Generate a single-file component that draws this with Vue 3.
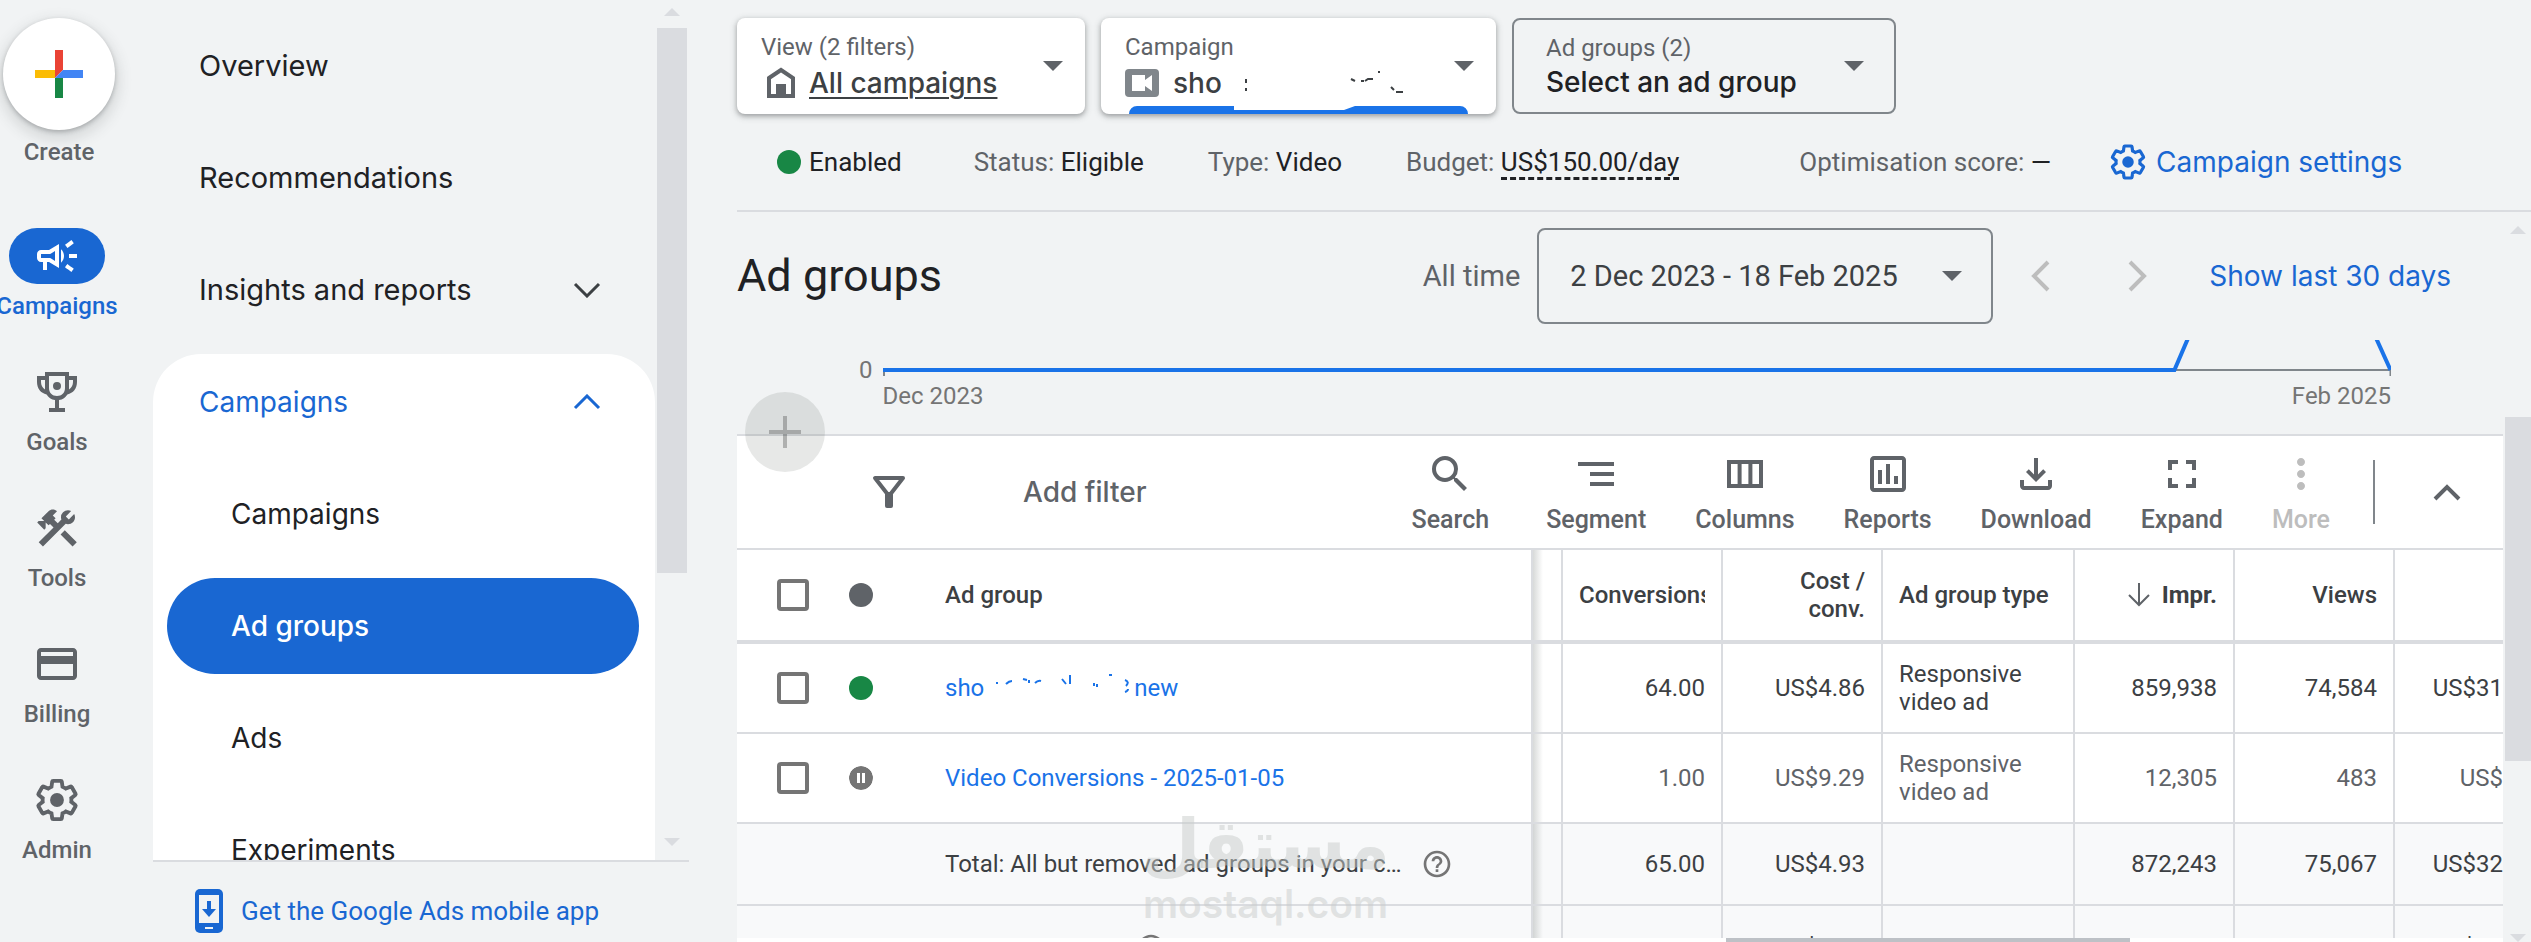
<script setup>
import { ref } from "vue";

const railItems = ["Campaigns", "Goals", "Tools", "Billing", "Admin"];

const navItems = ["Overview", "Recommendations", "Insights and reports"];
const subItems = ["Campaigns", "Ad groups", "Ads", "Experiments"];

const tools = ["Search", "Segment", "Columns", "Reports", "Download", "Expand", "More"];

const allSelected = ref(false);

const rows = ref([
  {
    paused: false,
    name: "sho",
    tail: "new",
    selected: false,
    conversions: "64.00",
    cost: "US$4.86",
    type: "Responsive video ad",
    impr: "859,938",
    views: "74,584",
    spend: "US$31",
  },
  {
    paused: true,
    name: "Video Conversions - 2025-01-05",
    selected: false,
    conversions: "1.00",
    cost: "US$9.29",
    type: "Responsive video ad",
    impr: "12,305",
    views: "483",
    spend: "US$",
  },
]);

const gearPath =
  "M19.43 12.98c.04-.32.07-.64.07-.98s-.03-.66-.07-.98l2.11-1.65c.19-.15.24-.42.12-.64l-2-3.46c-.12-.22-.39-.3-.61-.22l-2.49 1c-.52-.4-1.08-.73-1.69-.98l-.38-2.65A.488.488 0 0 0 14 2h-4c-.25 0-.46.18-.49.42l-.38 2.65c-.61.25-1.17.59-1.69.98l-2.49-1c-.23-.09-.49 0-.61.22l-2 3.46c-.13.22-.07.49.12.64l2.11 1.65c-.04.32-.07.65-.07.98s.03.66.07.98l-2.11 1.65c-.19.15-.24.42-.12.64l2 3.46c.12.22.39.3.61.22l2.49-1c.52.4 1.08.73 1.69.98l.38 2.65c.03.24.24.42.49.42h4c.25 0 .46-.18.49-.42l.38-2.65c.61-.25 1.17-.59 1.69-.98l2.49 1c.23.09.49 0 .61-.22l2-3.46c.12-.22.07-.49-.12-.64z";

const railPaths = {
  Campaigns:
    "M18 11v2h4v-2h-4zm-2 6.61c.96.71 2.21 1.65 3.2 2.39.4-.53.8-1.07 1.2-1.6-.99-.74-2.24-1.68-3.2-2.4-.4.54-.8 1.08-1.2 1.61zM20.4 5.6c-.4-.53-.8-1.07-1.2-1.6-.99.74-2.24 1.68-3.2 2.4.4.53.8 1.07 1.2 1.6.96-.72 2.21-1.65 3.2-2.4zM4 9c-1.1 0-2 .9-2 2v2c0 1.1.9 2 2 2h1v4h2v-4h1l5 3V6L8 9H4zm5.03 1.71L11 9.53v4.94l-1.97-1.18-.48-.29H4v-2h4.55l.48-.29zM15.5 12c0-1.33-.58-2.53-1.5-3.35v6.69c.92-.81 1.5-2.01 1.5-3.34z",
  Goals:
    "M6 2h12v2h4v3c0 3.2-1.9 5.6-4.8 6.2-.9 1.5-2.3 2.5-4.2 2.8V20h3v2H8v-2h3v-4c-1.9-.3-3.3-1.3-4.2-2.8C3.9 12.6 2 10.2 2 7V4h4zm2 2v6c0 2.4 1.6 4 4 4s4-1.6 4-4V4zM4 6v1c0 1.6.7 2.9 2 3.7V6zm14 0v4.7c1.3-.8 2-2.1 2-3.7V6zM12 7a2 2 0 1 0 0 4 2 2 0 0 0 0-4z",
  Tools:
    "M13.78 15.3l6 6 2.11-2.16-6-6zM17.5 10.1c-.39 0-.81-.05-1.14-.19L4.97 21.25 2.86 19.14l7.41-7.4L8.5 9.96l-.71.71-1.46-1.41v2.86l-.7.7L2.11 9.26l.7-.7h2.81L4.22 7.16l3.56-3.56c1.17-1.17 3.05-1.17 4.22 0L9.89 5.74l1.41 1.4-.71.71 1.79 1.78 1.82-1.88c-.14-.33-.2-.75-.2-1.12a3.49 3.49 0 0 1 3.5-3.52c.59 0 1.11.14 1.58.42L16.41 6.2l1.5 1.5 2.67-2.67c.28.47.42.97.42 1.6 0 1.92-1.55 3.47-3.5 3.47z",
  Billing:
    "M20 4H4c-1.11 0-1.99.89-1.99 2L2 18c0 1.11.89 2 2 2h16c1.11 0 2-.89 2-2V6c0-1.11-.89-2-2-2zm0 14H4v-6h16v6zm0-10H4V6h16v2z",
};

const toolPaths = {
  Search:
    "M15.5 14h-.79l-.28-.27A6.471 6.471 0 0 0 16 9.5 6.5 6.5 0 1 0 9.5 16c1.61 0 3.09-.59 4.23-1.57l.27.28v.79l5 4.99L20.49 19l-4.99-5zm-6 0C7.01 14 5 11.99 5 9.5S7.01 5 9.5 5 14 7.01 14 9.5 11.99 14 9.5 14z",
  Segment: "M3 6h18v2H3zM9 11h12v2H9zM9 16h12v2H9z",
  Columns: "M3 5h18v14H3zM5 7v10h3.3V7zm5.3 0v10h3.4V7zm5.4 0v10H19V7z",
  Reports:
    "M19 3H5c-1.1 0-2 .9-2 2v14c0 1.1.9 2 2 2h14c1.1 0 2-.9 2-2V5c0-1.1-.9-2-2-2zm0 16H5V5h14zM7 10h2v7H7zM11 7h2v10h-2zM15 13h2v4h-2z",
  Download:
    "M11 4h2v8.2l2.6-2.6L17 11l-5 5-5-5 1.4-1.4 2.6 2.6zM4 15h2v3h12v-3h2v3c0 1.1-.9 2-2 2H6c-1.1 0-2-.9-2-2z",
  Expand:
    "M7 14H5v5h5v-2H7v-3zm-2-4h2V7h3V5H5v5zm12 7h-3v2h5v-5h-2v3zM14 5v2h3v3h2V5h-5z",
  More: "M12 8c1.1 0 2-.9 2-2s-.9-2-2-2-2 .9-2 2 .9 2 2 2zm0 2c-1.1 0-2 .9-2 2s.9 2 2 2 2-.9 2-2-.9-2-2-2zm0 6c-1.1 0-2 .9-2 2s.9 2 2 2 2-.9 2-2-.9-2-2-2z",
};

const helpPath =
  "M11 18h2v-2h-2v2zm1-16C6.48 2 2 6.48 2 12s4.48 10 10 10 10-4.48 10-10S17.52 2 12 2zm0 18c-4.41 0-8-3.59-8-8s3.59-8 8-8 8 3.59 8 8-3.59 8-8 8zm0-14c-2.21 0-4 1.79-4 4h2c0-1.1.9-2 2-2s2 .9 2 2c0 2-3 1.75-3 5h2c0-2.25 3-2.5 3-5 0-2.21-1.79-4-4-4z";
</script>

<template>
  <div class="app">
    <nav class="rail" aria-label="Main">
      <button class="create">
        <span class="create-circle">
          <svg width="48" height="48" viewBox="0 0 48 48">
            <path d="M20 0h8v20l-8 8z" fill="#ea4335" />
            <path d="M0 20h20v8H0z" fill="#fbbc04" />
            <path d="M28 20h20v8H20z" fill="#4285f4" />
            <path d="M20 28h8v20h-8z" fill="#188745" />
          </svg>
        </span>
        Create
      </button>
      <a
        v-for="item in railItems"
        :key="item"
        href="#"
        class="rail-item"
        :class="{ active: item === 'Campaigns' }"
      >
        <span class="rail-pill">
          <svg v-if="item === 'Admin'" width="48" height="48" viewBox="-0.5 -0.5 25 25">
            <path :d="gearPath" fill="none" stroke="currentColor" stroke-width="2" />
            <circle cx="12" cy="12" r="3.6" fill="currentColor" />
          </svg>
          <svg v-else width="48" height="48" viewBox="0 0 24 24">
            <path
              :d="railPaths[item]"
              fill="currentColor"
              :fill-rule="item === 'Goals' ? 'evenodd' : 'nonzero'"
            />
          </svg>
        </span>
        <span>{{ item }}</span>
      </a>
    </nav>

    <aside class="side">
      <div class="side-scroll">
        <div class="side-list">
          <a v-for="item in navItems" :key="item" href="#" class="side-item">
            {{ item }}
            <svg
              v-if="item === 'Insights and reports'"
              width="28"
              height="16"
              viewBox="0 0 28 16"
            >
              <path d="M2 2l12 12L26 2" fill="none" stroke="#3c4043" stroke-width="3" />
            </svg>
          </a>
          <div class="panel">
            <a href="#" class="side-item open">
              Campaigns
              <svg width="28" height="16" viewBox="0 0 28 16">
                <path d="M2 14L14 2l12 12" fill="none" stroke="currentColor" stroke-width="3" />
              </svg>
            </a>
            <a
              v-for="item in subItems"
              :key="item"
              href="#"
              class="side-item sub"
              :class="{ current: item === 'Ad groups' }"
              >{{ item }}</a
            >
          </div>
        </div>
        <div class="scrollbar side-bar">
          <span class="arrow-up"></span>
          <span class="thumb"></span>
          <span class="arrow-down"></span>
        </div>
      </div>
      <a href="#" class="mobile-app">
        <svg width="28" height="44" viewBox="0 0 28 44">
          <rect width="28" height="44" rx="5" fill="#1967d2" />
          <path d="M4 6h20v28H4z" fill="#f1f3f4" />
          <path d="M12 12h4v8h5l-7 8-7-8h5z" fill="#1967d2" />
          <path d="M10 38h8v2h-8z" fill="#f1f3f4" />
        </svg>
        Get the Google Ads mobile app
      </a>
    </aside>

    <main class="main">
      <div class="pickers">
        <button class="picker view">
          <span class="picker-text">
            <span class="small">View (2 filters)</span>
            <span class="big">
              <svg class="house" width="28" height="32" viewBox="0 0 28 32">
                <path
                  d="M2 11L14 3l12 8v18H2z"
                  fill="none"
                  stroke="#5f6368"
                  stroke-width="4"
                />
                <path d="M9 17h10v13H9z" fill="#5f6368" />
              </svg>
              <span class="underlined">All campaigns</span>
            </span>
          </span>
          <span class="caret"></span>
        </button>
        <button class="picker campaign">
          <span class="picker-text">
            <span class="small">Campaign</span>
            <span class="big">
              <svg width="34" height="32" viewBox="0 0 34 32">
                <rect y="2" width="34" height="28" rx="4" fill="#80868b" />
                <path d="M7 8h13v5l7-5v16l-7-5v5H7z" fill="#fff" />
              </svg>
              <span>sho</span>
              <svg class="marks" width="180" height="28" viewBox="0 0 180 28">
                <path
                  d="M13 10v4M13 19v3M118 10l4 2M128 12h3M132 12l3-2h5M145 3h2M158 18l3 3M163 23h7"
                  fill="none"
                  stroke="#3c4043"
                  stroke-width="2"
                />
              </svg>
            </span>
          </span>
          <span class="caret"></span>
          <svg class="tab-bar" height="8" viewBox="0 0 339 8" preserveAspectRatio="none">
            <path
              d="M0 8a8 8 0 0 1 8-8h97v4h110l11-4h105a8 8 0 0 1 8 8z"
              fill="#1a73e8"
            />
          </svg>
        </button>
        <button class="picker groups">
          <span class="picker-text">
            <span class="small">Ad groups (2)</span>
            <span class="big">Select an ad group</span>
          </span>
          <span class="caret"></span>
        </button>
      </div>

      <div class="status">
        <span class="state-label"><i class="dot green"></i>Enabled</span>
        <span class="s-status">Status: <b>Eligible</b></span>
        <span class="s-type">Type: <b>Video</b></span>
        <span class="s-budget">Budget: <b class="dashed">US$150.00/day</b></span>
        <span class="s-score">Optimisation score: <b>—</b></span>
        <a href="#" class="settings">
          <svg width="40" height="40" viewBox="-0.5 -0.5 25 25">
            <path :d="gearPath" fill="none" stroke="currentColor" stroke-width="2" />
            <circle cx="12" cy="12" r="3.6" fill="currentColor" />
          </svg>
          Campaign settings
        </a>
      </div>

      <div class="body">
        <div class="content">
          <header class="heading">
            <h1>Ad groups</h1>
            <span>All time</span>
            <button class="date">
              2 Dec 2023 - 18 Feb 2025
              <span class="caret"></span>
            </button>
            <button class="step" aria-label="Previous period">
              <svg width="20" height="32" viewBox="0 0 20 32">
                <path d="M17 2L3 16l14 14" fill="none" stroke="#bdbdbd" stroke-width="4" />
              </svg>
            </button>
            <button class="step next" aria-label="Next period">
              <svg width="20" height="32" viewBox="0 0 20 32">
                <path d="M3 2l14 14L3 30" fill="none" stroke="#bdbdbd" stroke-width="4" />
              </svg>
            </button>
            <a href="#" class="last30">Show last 30 days</a>
          </header>

          <section class="chart" aria-label="Performance">
            <span class="zero">0</span>
            <div class="plot">
              <svg height="40" viewBox="0 0 1508 40" preserveAspectRatio="none">
                <path d="M1 30v6M1290 30h217v6" fill="none" stroke="#80868b" stroke-width="2" />
                <path
                  d="M0 30h1291l18-42M1488-12l19 42"
                  fill="none"
                  stroke="#1a73e8"
                  stroke-width="4"
                />
              </svg>
              <div class="dates"><span>Dec 2023</span><span>Feb 2025</span></div>
            </div>
          </section>

          <div class="toolbar">
            <button class="add" aria-label="Add ad group">
              <svg width="32" height="32" viewBox="0 0 32 32">
                <path d="M14 0h4v14h14v4H18v14h-4V18H0v-4h14z" fill="#000" fill-opacity=".24" />
              </svg>
            </button>
            <button class="filter">
              <svg width="48" height="48" viewBox="0 0 24 24">
                <path
                  d="M5 5h14l-7 9z"
                  fill="none"
                  stroke="currentColor"
                  stroke-width="2"
                  stroke-linejoin="round"
                />
                <path d="M10 12h4v7q0 1-1 1h-2q-1 0-1-1z" fill="currentColor" />
              </svg>
              Add filter
            </button>
            <div class="tools">
              <button
                v-for="tool in tools"
                :key="tool"
                class="tool"
                :disabled="tool === 'More'"
              >
                <svg width="48" height="48" viewBox="0 0 24 24">
                  <path :d="toolPaths[tool]" fill="currentColor" fill-rule="evenodd" />
                </svg>
                {{ tool }}
              </button>
            </div>
            <button class="collapse" aria-label="Collapse">
              <svg width="28" height="18" viewBox="0 0 28 18">
                <path d="M2 16L14 4l12 12" fill="none" stroke="#5f6368" stroke-width="4" />
              </svg>
            </button>
          </div>

          <div class="table-wrap">
            <table>
              <colgroup>
                <col class="c-check" />
                <col class="c-dot" />
                <col />
                <col class="c-gap" />
                <col class="c-num" />
                <col class="c-num" />
                <col class="c-type" />
                <col class="c-num" />
                <col class="c-num" />
                <col class="c-last" />
              </colgroup>
              <thead>
                <tr>
                  <th class="check">
                    <input v-model="allSelected" type="checkbox" aria-label="Select all" />
                  </th>
                  <th class="state"><i class="dot gray"></i></th>
                  <th class="name">Ad group</th>
                  <th class="gap"></th>
                  <th class="num conv">Conversions</th>
                  <th class="num">Cost / conv.</th>
                  <th class="type">Ad group type</th>
                  <th class="num sorted">
                    <svg width="22" height="24" viewBox="0 0 22 24">
                      <path
                        d="M11 0v22M1 12l10 10 10-10"
                        fill="none"
                        stroke="#5f6368"
                        stroke-width="2"
                      />
                    </svg>
                    Impr.
                  </th>
                  <th class="num">Views</th>
                  <th class="num last"></th>
                </tr>
              </thead>
              <tbody>
                <tr v-for="row in rows" :key="row.name" :class="{ paused: row.paused }">
                  <td class="check">
                    <input v-model="row.selected" type="checkbox" :aria-label="row.name" />
                  </td>
                  <td class="state">
                    <svg v-if="row.paused" class="dot" viewBox="0 0 24 24">
                      <circle cx="12" cy="12" r="12" fill="#757575" />
                      <path d="M8 7h3v10H8zM13 7h3v10h-3z" fill="#fff" />
                    </svg>
                    <i v-else class="dot green"></i>
                  </td>
                  <td class="name">
                    <a href="#">
                      {{ row.name }}
                      <template v-if="row.tail">
                        <svg width="150" height="24" viewBox="0 0 150 24">
                          <path
                            d="M13 8v2M22 10q3-3 6-3M39 5l4 1M45 9v-3M51 9q3-3 6-2M78 5l4 5M86 1v9M113 10v3M110 9v3M125 1h3M141 6q5 2 1 6M141 18q3-1 3-3"
                            fill="none"
                            stroke="#1a73e8"
                            stroke-width="2"
                          />
                        </svg>
                        {{ row.tail }}
                      </template>
                    </a>
                  </td>
                  <td class="gap"></td>
                  <td class="num">{{ row.conversions }}</td>
                  <td class="num">{{ row.cost }}</td>
                  <td class="type">{{ row.type }}</td>
                  <td class="num">{{ row.impr }}</td>
                  <td class="num">{{ row.views }}</td>
                  <td class="num last">{{ row.spend }}</td>
                </tr>
              </tbody>
              <tfoot>
                <tr>
                  <td></td>
                  <td></td>
                  <td class="name">
                    <span class="total">
                      <span class="ellipsis">Total: All but removed ad groups in your campaign</span>
                      <svg width="32" height="32" viewBox="0 0 24 24">
                        <path :d="helpPath" fill="#757575" />
                      </svg>
                    </span>
                  </td>
                  <td class="gap"></td>
                  <td class="num">65.00</td>
                  <td class="num">US$4.93</td>
                  <td class="type"></td>
                  <td class="num">872,243</td>
                  <td class="num">75,067</td>
                  <td class="num last">US$32</td>
                </tr>
                <tr class="more-totals">
                  <td></td>
                  <td class="expander">
                    <svg width="32" height="20" viewBox="0 0 32 20">
                      <path d="M2 2l14 14L30 2" fill="none" stroke="#5f6368" stroke-width="4" />
                    </svg>
                  </td>
                  <td class="name">
                    <span class="total">
                      <span>Total: Campaign</span>
                      <svg width="32" height="32" viewBox="0 0 24 24">
                        <path :d="helpPath" fill="#757575" />
                      </svg>
                    </span>
                  </td>
                  <td class="gap"></td>
                  <td class="num">65.00</td>
                  <td class="num">US$4.93</td>
                  <td class="type"></td>
                  <td class="num">872,243</td>
                  <td class="num">75,067</td>
                  <td class="num last">US$32</td>
                </tr>
              </tfoot>
            </table>
            <div class="watermark">
              <span class="wm-ar">مستقل</span>
              <span class="wm-en">mostaql.com</span>
            </div>
          </div>
          <div class="h-scroll"><span></span></div>
        </div>
        <div class="scrollbar body-bar">
          <span class="arrow-up"></span>
          <span class="thumb"></span>
          <span class="arrow-down"></span>
        </div>
      </div>
    </main>
  </div>
</template>

<style>
body {
  margin: 0;
  background: #f1f3f4;
}
</style>

<style scoped>
* {
  box-sizing: border-box;
}

.app {
  display: grid;
  grid-template-columns: 153px 536px minmax(0, 1fr);
  height: 100vh;
  overflow: hidden;
  background: #f1f3f4;
  font-family: Roboto, "Liberation Sans", sans-serif;
  font-size: 24px;
  line-height: 28px;
  color: #3c4043;
}

button {
  font: inherit;
  color: inherit;
  background: none;
  border: 0;
  padding: 0;
  cursor: pointer;
}

a {
  color: inherit;
  text-decoration: none;
}

svg {
  flex: none;
}

/* left rail */
.rail {
  display: flex;
  flex-direction: column;
  align-items: flex-start;
  width: 114px;
  font-weight: 500;
  color: #5f6368;
}

.create {
  display: flex;
  flex-direction: column;
  align-items: center;
  gap: 8px;
  width: 112px;
  height: 210px;
  margin: 18px 0 0 3px;
  flex: none;
}

.create-circle {
  display: flex;
  align-items: center;
  justify-content: center;
  width: 112px;
  height: 112px;
  border-radius: 50%;
  background: #fff;
  box-shadow: 0 2px 4px rgba(60, 64, 67, 0.3), 0 6px 14px 4px rgba(60, 64, 67, 0.15);
}

.rail-item {
  display: flex;
  flex-direction: column;
  align-items: center;
  gap: 8px;
  width: 114px;
  height: 136px;
  flex: none;
}

.rail-item.active {
  color: #1967d2;
}

.rail-pill {
  display: flex;
  align-items: center;
  justify-content: center;
  width: 96px;
  height: 56px;
  border-radius: 28px;
}

.active .rail-pill {
  background: #1967d2;
  color: #fff;
}

/* side navigation */
.side {
  display: flex;
  flex-direction: column;
  min-height: 0;
}

.side-scroll {
  flex: 1;
  display: flex;
  min-height: 0;
  border-bottom: 2px solid #dadce0;
}

.side-list {
  flex: 1;
  padding-top: 18px;
  overflow: hidden;
  font-family: Inter, Roboto, sans-serif;
  font-size: 28px;
  line-height: 32px;
  color: #202124;
}

.side-item {
  display: flex;
  align-items: center;
  justify-content: space-between;
  height: 96px;
  margin-bottom: 16px;
  padding: 0 54px 0 46px;
  font-size: 29px;
}

.panel {
  padding: 0 16px 0 14px;
  border-radius: 48px 48px 0 0;
  background: #fff;
}

.panel .side-item {
  padding: 0 38px 0 32px;
  font-size: 28px;
}

.panel .open {
  color: #1967d2;
}

.panel .sub {
  padding-left: 64px;
  border-radius: 48px;
}

.panel .current {
  background: #1967d2;
  color: #fff;
  font-weight: 500;
}

.mobile-app {
  display: flex;
  align-items: center;
  gap: 18px;
  height: 80px;
  padding: 18px 0 0 42px;
  font-size: 26px;
  color: #1967d2;
}

/* drawn scrollbars */
.scrollbar {
  display: flex;
  flex-direction: column;
  align-items: center;
}

.scrollbar .thumb {
  width: 100%;
  background: #dadce0;
}

.arrow-up,
.arrow-down {
  border: 8px solid transparent;
}

.arrow-up {
  border-top: 0;
  border-bottom-color: #dadce0;
}

.arrow-down {
  border-bottom: 0;
  border-top-color: #dadce0;
  margin-top: auto;
}

.side-bar {
  width: 30px;
  margin: 0 2px;
  padding: 8px 0 14px;
}

.side-bar .thumb {
  height: 65%;
  margin-top: 12px;
}

.body-bar {
  width: 26px;
  margin-left: 2px;
  padding-top: 14px;
}

.body-bar .thumb {
  height: 48%;
  margin-top: 183px;
}

/* pickers */
.main {
  display: flex;
  flex-direction: column;
  min-width: 0;
  min-height: 0;
  padding-left: 48px;
}

.pickers {
  display: flex;
  gap: 16px;
  padding-top: 18px;
}

.picker {
  position: relative;
  display: flex;
  align-items: center;
  justify-content: space-between;
  height: 96px;
  border-radius: 8px;
  background: #fff;
  text-align: left;
  box-shadow: 0 2px 4px rgba(60, 64, 67, 0.35), 0 2px 6px 2px rgba(60, 64, 67, 0.15);
}

.view {
  width: 348px;
  padding: 0 22px 0 24px;
}

.campaign {
  width: 395px;
  padding: 0 22px 0 24px;
}

.groups {
  width: 384px;
  padding: 0 30px 0 32px;
  border: 2px solid #80868b;
  background: none;
  box-shadow: none;
}

.picker-text {
  display: flex;
  flex-direction: column;
  gap: 6px;
}

.groups .picker-text {
  gap: 4px;
}

.small {
  color: #5f6368;
}

.big {
  display: flex;
  align-items: center;
  gap: 14px;
  font-family: Inter, Roboto, sans-serif;
  font-size: 28px;
  line-height: 32px;
  font-weight: 500;
}

.groups .big {
  color: #202124;
}

.house {
  margin-left: 6px;
}

.underlined {
  text-decoration: underline;
  text-decoration-thickness: 2px;
  text-underline-offset: 4px;
}

.caret {
  border: 10px solid transparent;
  border-top-color: #5f6368;
  border-bottom: 0;
  flex: none;
}

.marks {
  position: absolute;
  left: 132px;
  top: 51px;
}

.tab-bar {
  position: absolute;
  left: 28px;
  bottom: 0;
  width: 339px;
}

/* campaign status line */
.status {
  display: flex;
  align-items: center;
  height: 98px;
  padding-left: 40px;
  border-bottom: 2px solid #dadce0;
  font-size: 26px;
  color: #5f6368;
  white-space: nowrap;
}

.status b {
  font-weight: 400;
  color: #202124;
}

.state-label {
  display: flex;
  align-items: center;
  gap: 8px;
  color: #202124;
}

.dot {
  display: block;
  width: 24px;
  height: 24px;
  border-radius: 50%;
}

.green {
  background: #188745;
}

.gray {
  background: #5f6368;
}

.s-status {
  margin-left: 72px;
}

.s-type,
.s-budget {
  margin-left: 64px;
}

.s-score {
  margin-left: 120px;
}

.status .dashed {
  border-bottom: 3px dashed #202124;
}

.settings {
  display: flex;
  align-items: center;
  gap: 8px;
  margin-left: 57px;
  font-family: Inter, Roboto, sans-serif;
  color: #1967d2;
  font-size: 28px;
}

/* heading */
.body {
  flex: 1;
  display: flex;
  min-height: 0;
}

.content {
  flex: 1;
  display: flex;
  flex-direction: column;
  min-width: 0;
}

.heading {
  display: flex;
  align-items: center;
  height: 128px;
  padding-right: 52px;
  font-size: 29px;
  line-height: 32px;
  color: #5f6368;
}

h1 {
  margin: 0 auto 0 0;
  font-size: 45px;
  line-height: 52px;
  font-weight: 400;
  color: #202124;
}

.date {
  display: flex;
  align-items: center;
  justify-content: space-between;
  width: 456px;
  height: 96px;
  margin: 0 38px 0 17px;
  padding: 0 29px 0 31px;
  border: 2px solid #80868b;
  border-radius: 8px;
  color: #3c4043;
}

.step {
  display: flex;
}

.next {
  margin: 0 62px 0 76px;
}

.last30 {
  font-family: Inter, Roboto, sans-serif;
  font-size: 28px;
  color: #1967d2;
}

/* chart */
.chart {
  display: flex;
  align-items: flex-start;
  gap: 10px;
  height: 94px;
  padding: 0 112px 0 122px;
  color: #757575;
}

.zero {
  padding-top: 16px;
}

.plot {
  flex: 1;
}

.plot svg {
  display: block;
  width: 100%;
}

.dates {
  display: flex;
  justify-content: space-between;
  padding-top: 2px;
}

/* table toolbar */
.toolbar {
  position: relative;
  display: flex;
  align-items: center;
  height: 116px;
  border-top: 2px solid #dadce0;
  border-bottom: 2px solid #dadce0;
  background: #fff;
  color: #5f6368;
  font-weight: 500;
}

.add {
  position: absolute;
  left: 8px;
  top: -44px;
  display: flex;
  align-items: center;
  justify-content: center;
  width: 80px;
  height: 80px;
  border-radius: 50%;
  background: rgba(60, 64, 60, 0.12);
}

.filter {
  display: flex;
  align-items: center;
  gap: 110px;
  margin: 0 auto 0 128px;
  font-family: Inter, Roboto, sans-serif;
  font-size: 28px;
}

.tools {
  display: flex;
  gap: 49px;
  margin-right: 43px;
  font-size: 25px;
}

.tool {
  display: flex;
  flex-direction: column;
  align-items: center;
  gap: 8px;
}

.tool:first-child {
  margin-right: 8px;
}

.tool:disabled {
  color: #bdbdbd;
  cursor: default;
}

.collapse {
  display: flex;
  align-items: center;
  height: 64px;
  padding: 0 42px 0 58px;
  border-left: 2px solid #80868b;
}

/* table */
.table-wrap {
  position: relative;
  flex: 1;
  min-height: 0;
  overflow: hidden;
  background: #fff;
}

table {
  width: 100%;
  table-layout: fixed;
  border-spacing: 0;
}

.c-check {
  width: 98px;
}

.c-dot {
  width: 52px;
}

.c-gap {
  width: 28px;
}

.c-num {
  width: 160px;
}

.c-type {
  width: 192px;
}

.c-last {
  width: 110px;
}

th,
td {
  height: 90px;
  padding: 0;
  border-bottom: 2px solid #dadce0;
  text-align: left;
  overflow: hidden;
}

th {
  height: 94px;
  border-bottom-width: 4px;
  font-weight: 500;
}

tfoot td {
  height: 82px;
  background: #f8f9fa;
}

.check {
  padding-left: 40px;
}

.state {
  padding-left: 14px;
}

.name {
  padding-left: 58px;
  border-right: 2px solid #dadce0;
}

.name a {
  display: flex;
  color: #1a73e8;
  white-space: nowrap;
}

.gap,
tfoot .gap {
  background-image: linear-gradient(90deg, rgba(60, 70, 64, 0.2), transparent 10px);
}

.num,
.type {
  padding: 0 16px;
  border-left: 2px solid #dadce0;
}

.num {
  text-align: right;
}

.last {
  padding: 0;
}

.conv {
  text-align: left;
  overflow: clip;
  overflow-clip-margin: content-box;
}

.sorted {
  font-weight: 700;
  white-space: nowrap;
}

.sorted svg {
  vertical-align: -4px;
  margin-right: 6px;
}

.paused .num,
.paused .type {
  color: #5f6368;
}

.more-totals td {
  padding-top: 4px;
}

.more-totals .expander {
  padding: 8px 0 0 10px;
}

.total {
  display: flex;
  align-items: center;
  gap: 16px;
}

.ellipsis {
  width: 460px;
  overflow: hidden;
  text-overflow: ellipsis;
  white-space: nowrap;
}

input[type="checkbox"] {
  appearance: none;
  display: block;
  width: 32px;
  height: 32px;
  margin: 0;
  border: 4px solid #757575;
  border-radius: 4px;
}

input[type="checkbox"]:checked {
  background: #1a73e8;
}

.watermark {
  position: absolute;
  left: 406px;
  top: 256px;
  width: 245px;
  display: flex;
  flex-direction: column;
  align-items: center;
  color: rgba(200, 203, 202, 0.5);
  pointer-events: none;
}

.wm-ar {
  font: 700 68px/78px "DejaVu Sans", sans-serif;
}

.wm-en {
  font: 600 39px/40px Inter, sans-serif;
}

.h-scroll {
  height: 4px;
  padding-left: 56%;
  background: #fff;
}

.h-scroll span {
  display: block;
  width: 52%;
  height: 4px;
  background: #bdc1c6;
}
</style>
